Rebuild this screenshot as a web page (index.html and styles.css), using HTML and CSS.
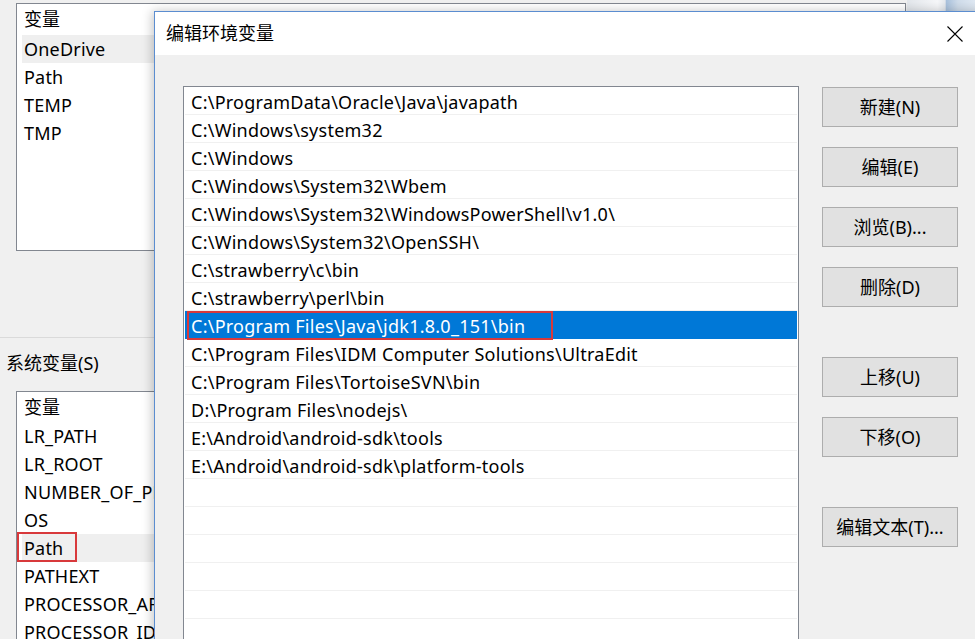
FILE: index.html
```html
<!DOCTYPE html>
<html lang="zh-CN">
<head>
<meta charset="utf-8">
<title>编辑环境变量</title>
<link rel="stylesheet" href="styles.css">
</head>
<body>
<div class="desktop">
  <div class="bg-window">
    <div class="top-row">
      <div class="listbox user-list">
        <div class="lb-header">变量</div>
        <div class="lb-row hover">OneDrive</div>
        <div class="lb-row">Path</div>
        <div class="lb-row">TEMP</div>
        <div class="lb-row">TMP</div>
      </div>
      <div class="side-strip"></div>
    </div>
    <div class="group-sep"></div>
    <div class="group-label">系统变量(S)</div>
    <div class="listbox sys-list">
      <div class="lb-header">变量</div>
      <div class="lb-row">LR_PATH</div>
      <div class="lb-row">LR_ROOT</div>
      <div class="lb-row">NUMBER_OF_PROCESSORS</div>
      <div class="lb-row">OS</div>
      <div class="lb-row hover marked">Path<span class="mark mark-path"></span></div>
      <div class="lb-row">PATHEXT</div>
      <div class="lb-row">PROCESSOR_ARCHITECTURE</div>
      <div class="lb-row">PROCESSOR_IDENTIFIER</div>
    </div>
  </div>

  <div class="dialog">
    <div class="titlebar">
      <div class="title">编辑环境变量</div>
      <svg class="close" width="16" height="16" viewBox="0 0 16 16" aria-hidden="true">
        <path d="M0.5 0.5 L15.5 15.5 M15.5 0.5 L0.5 15.5" stroke="#000" stroke-width="1.1" fill="none"/>
      </svg>
    </div>
    <div class="dlg-body">
      <div class="pathlist">
        <div class="p-row">C:\ProgramData\Oracle\Java\javapath</div>
        <div class="p-row">C:\Windows\system32</div>
        <div class="p-row">C:\Windows</div>
        <div class="p-row">C:\Windows\System32\Wbem</div>
        <div class="p-row">C:\Windows\System32\WindowsPowerShell\v1.0\</div>
        <div class="p-row">C:\Windows\System32\OpenSSH\</div>
        <div class="p-row">C:\strawberry\c\bin</div>
        <div class="p-row">C:\strawberry\perl\bin</div>
        <div class="p-row selected">C:\Program Files\Java\jdk1.8.0_151\bin<span class="mark mark-jdk"></span></div>
        <div class="p-row">C:\Program Files\IDM Computer Solutions\UltraEdit</div>
        <div class="p-row">C:\Program Files\TortoiseSVN\bin</div>
        <div class="p-row">D:\Program Files\nodejs\</div>
        <div class="p-row">E:\Android\android-sdk\tools</div>
        <div class="p-row">E:\Android\android-sdk\platform-tools</div>
        <div class="p-row"></div>
        <div class="p-row"></div>
        <div class="p-row"></div>
        <div class="p-row"></div>
        <div class="p-row"></div>
        <div class="p-row"></div>
      </div>
      <div class="buttons">
        <div class="btn">新建(N)</div>
        <div class="btn">编辑(E)</div>
        <div class="btn">浏览(B)...</div>
        <div class="btn">删除(D)</div>
        <div class="btn gap-big">上移(U)</div>
        <div class="btn">下移(O)</div>
        <div class="btn gap-big">编辑文本(T)...</div>
      </div>
    </div>
  </div>
</div>
</body>
</html>
```

FILE: styles.css
```css
* { box-sizing: border-box; }

html, body {
  margin: 0;
  padding: 0;
  width: 975px;
  height: 639px;
  overflow: hidden;
  background: #f0f0f0;
}

body {
  font-family: "Noto Sans", "Noto Sans CJK SC", sans-serif;
  font-size: 18px;
  color: #000;
}

.desktop {
  position: relative;
  width: 975px;
  height: 639px;
  overflow: hidden;
}

/* ---------- background window ---------- */
.bg-window {
  display: flex;
  flex-direction: column;
}

.top-row {
  display: flex;
  align-items: flex-start;
}

.listbox {
  background: #fff;
  border: 1px solid #828790;
  overflow: hidden;
  width: 890px;
  flex: none;
}

.user-list {
  margin: 3px 0 0 16px;
  height: 248px;
}

.side-strip {
  flex: 1;
  height: 40px;
  margin-left: 1px;
  background: linear-gradient(to right, #e2e6eb 0, #f6f7f9 45%, #e4e8ed 56%, #a9c1dc 58%, #cfdcea 75%, #dfe8f2 100%);
}

.lb-header {
  height: 31px;
  line-height: 31px;
  padding-left: 7px;
  white-space: nowrap;
}

.sys-list .lb-header {
  height: 30px;
  line-height: 30px;
}

.lb-row {
  position: relative;
  height: 28px;
  line-height: 28px;
  margin-left: 5px;
  padding-left: 2px;
  white-space: nowrap;
  letter-spacing: 0.2px;
}

.lb-row.hover {
  background: #efefef;
}

.group-sep {
  margin-top: 86px;
  width: 910px;
  height: 1px;
  background: #dadada;
}

.group-label {
  margin-top: 11px;
  padding-left: 6px;
  height: 28px;
  line-height: 28px;
}

.sys-list {
  margin: 14px 0 0 16px;
  height: 320px;
}

.mark {
  position: absolute;
  border: 2px solid #d8393b;
  pointer-events: none;
}

.mark-path {
  left: -5px;
  top: -2px;
  width: 60px;
  height: 30px;
}

/* ---------- dialog ---------- */
.dialog {
  position: absolute;
  left: 154px;
  top: 11px;
  width: 850px;
  height: 660px;
  background: #f0f0f0;
  border: 1px solid #5b8dd0;
  box-shadow: -2px 0 10px rgba(0, 0, 0, 0.22);
  display: flex;
  flex-direction: column;
}

.titlebar {
  height: 43px;
  background: #fff;
  display: flex;
  align-items: center;
  padding: 0 40px 0 11px;
  flex: none;
}

.title {
  flex: 1;
  line-height: 20px;
  margin-top: -1px;
}

.close {
  display: block;
}

.dlg-body {
  display: flex;
  align-items: flex-start;
  gap: 23px;
  padding: 31px 0 0 28px;
}

.pathlist {
  width: 616px;
  height: 600px;
  flex: none;
  background: #fff;
  border: 1px solid #828790;
  overflow: hidden;
}

.p-row {
  position: relative;
  height: 28px;
  line-height: 30px;
  margin: 0 1px;
  padding-left: 6px;
  border-bottom: 1px solid #f0f0f0;
  white-space: nowrap;
  letter-spacing: 0.25px;
}

.p-row.selected {
  background: #0078d7;
  color: #fff;
  border-bottom-color: #0078d7;
}

.mark-jdk {
  left: 2px;
  top: 0;
  width: 366px;
  height: 29px;
}

.buttons {
  display: flex;
  flex-direction: column;
  gap: 20px;
  width: 136px;
  flex: none;
  padding-top: 1px;
}

.btn {
  height: 40px;
  line-height: 38px;
  text-align: center;
  background: #e1e1e1;
  border: 1px solid #adadad;
  white-space: nowrap;
}

.btn.gap-big {
  margin-top: 30px;
}
```
